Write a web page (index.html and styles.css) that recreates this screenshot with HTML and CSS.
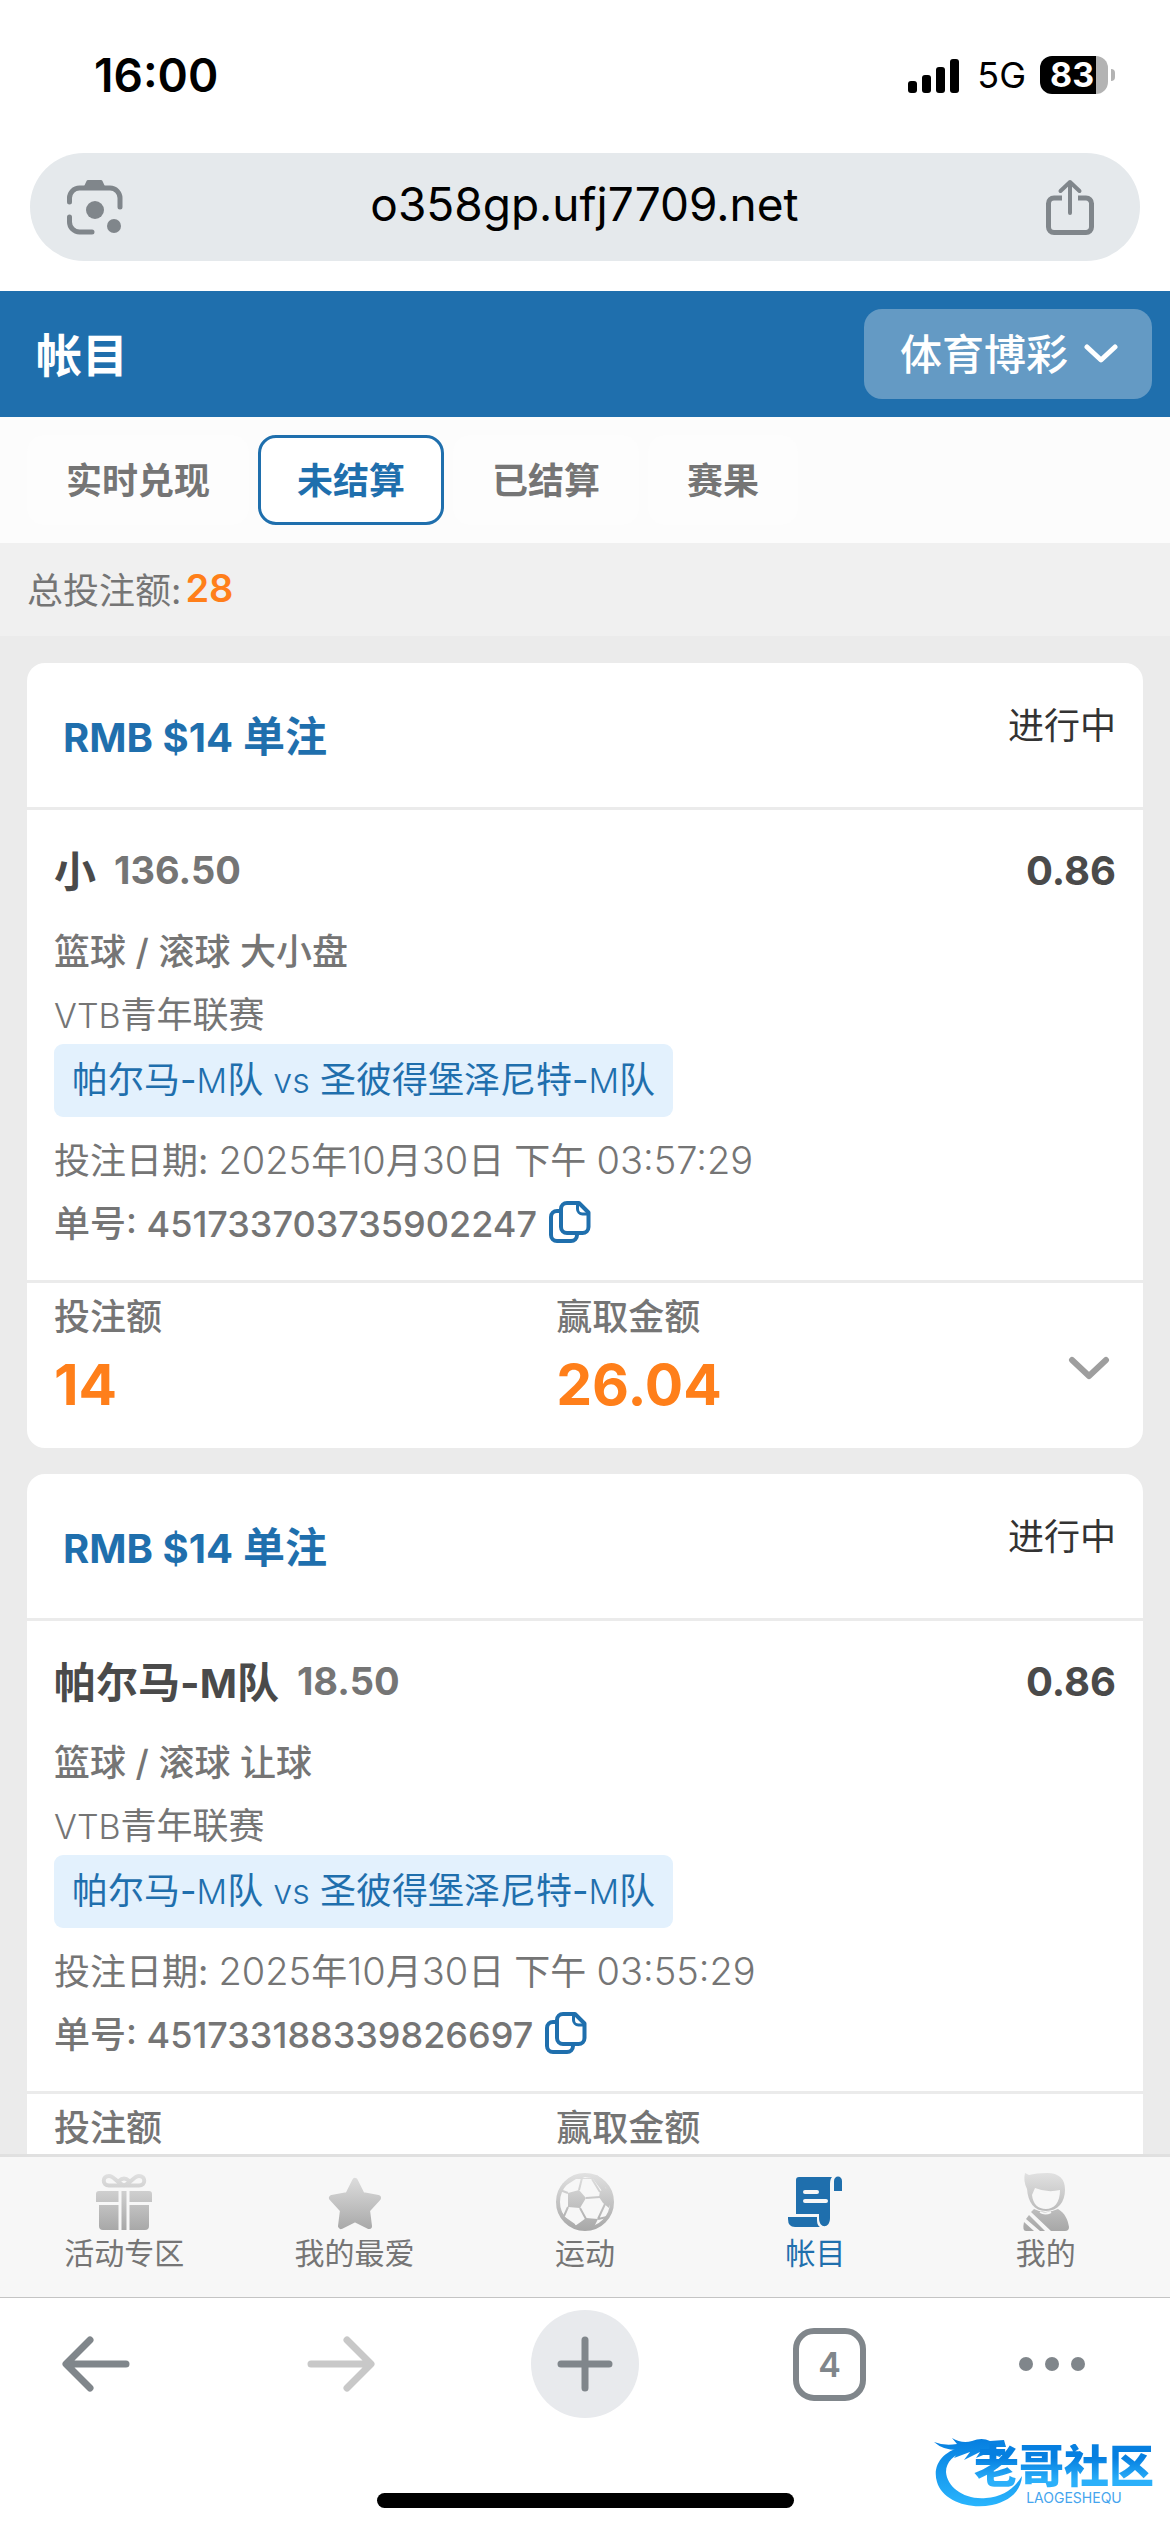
FILE: index.html
```html
<!DOCTYPE html>
<html lang="zh-CN">
<head>
<meta charset="utf-8">
<meta name="viewport" content="width=device-width, initial-scale=1">
<title>帐目</title>
<link rel="stylesheet" href="styles.css">
</head>
<body>
<div class="status-bar">
  <time class="clock">16:00</time>
  <div class="status-icons">
    <svg class="signal" width="52" height="35" viewBox="0 0 52 35" aria-hidden="true">
      <rect x="0" y="23" width="9" height="12" rx="3"/><rect x="14" y="17" width="9" height="18" rx="3"/><rect x="28" y="9" width="9" height="26" rx="3"/><rect x="42" y="1" width="9" height="34" rx="3"/>
    </svg>
    <span class="network">5G</span>
    <div class="battery">83</div>
    <span class="battery-cap"></span>
  </div>
</div>
<div class="address-bar">
  <button class="icon-button" aria-label="相机搜索">
    <svg width="56" height="56" viewBox="0 0 56 56" fill="none" stroke="#80868b" stroke-width="5" stroke-linecap="round" aria-hidden="true">
      <path d="M2.500 23V19a10 10 0 0 1 10-10H43a10 10 0 0 1 10 10V28M2.500 38V43a10 10 0 0 0 10 10H25"/>
      <path d="M18 9L21 2.500H34L37 9Z" fill="#80868b" stroke-width="3" stroke-linejoin="round"/>
      <circle cx="28" cy="31" r="9" fill="#80868b" stroke="none"/><circle cx="47" cy="47" r="7" fill="#80868b" stroke="none"/>
    </svg>
  </button>
  <input class="url" type="text" value="o358gp.ufj7709.net" aria-label="网址">
  <button class="icon-button" aria-label="分享">
    <svg width="48" height="57" viewBox="0 0 48 57" fill="none" stroke="#80868b" stroke-width="5" stroke-linejoin="round" aria-hidden="true">
      <path d="M16 19H8a5.500 5.500 0 0 0-5.500 5.500V48A5.500 5.500 0 0 0 8 53.500H40A5.500 5.500 0 0 0 45.500 48V24.500A5.500 5.500 0 0 0 40 19H32"/>
      <path d="M24 34V3M14.500 12L24 3L33.500 12" stroke-width="4" stroke-linecap="round"/>
    </svg>
  </button>
</div>
<header class="app-header">
  <h1 class="page-title">帐目</h1>
  <div class="product-picker">
    <select class="product-select" aria-label="产品"><option>体育博彩</option></select>
    <svg class="product-chevron" width="34" height="20" viewBox="0 0 34 20" fill="none" stroke="#fff" stroke-width="5" stroke-linecap="round" stroke-linejoin="round" aria-hidden="true"><path d="M3 3L17 16L31 3"/></svg>
  </div>
</header>
<nav class="tabs" aria-label="注单分类">
  <button class="tab">实时兑现</button>
  <button class="tab tab-active" aria-current="true">未结算</button>
  <button class="tab">已结算</button>
  <button class="tab">赛果</button>
</nav>
<div class="summary">总投注额:<strong class="summary-value">28</strong></div>
<main class="bet-list">
  <article class="card">
    <header class="card-head">
      <h2 class="bet-title"><span class="title-latin">RMB $14</span> 单注</h2>
      <span class="bet-state">进行中</span>
    </header>
    <div class="card-body">
      <div class="pick-row">
        <span class="pick">小</span><span class="handicap">136.50</span><span class="odds">0.86</span>
      </div>
      <p class="line market">篮球 / 滚球 大小盘</p>
      <p class="line league"><span class="latin">VTB</span>青年联赛</p>
      <p class="match">帕尔马-<span class="latin">M</span>队 <span class="latin">vs</span> 圣彼得堡泽尼特-<span class="latin">M</span>队</p>
      <p class="line">投注日期: <span class="digits">2025</span>年<span class="digits">10</span>月<span class="digits">30</span>日 下午 <span class="digits">03:57:29</span></p>
      <p class="line order">单号: 451733703735902247
        <button class="copy" aria-label="复制单号"><svg width="42" height="42" viewBox="0 0 42 42" fill="none" stroke="#1f6fad" stroke-width="4" stroke-linejoin="round" aria-hidden="true"><path d="M11 10H8a6 6 0 0 0-6 6V34a6 6 0 0 0 6 6H22a6 6 0 0 0 6-6V32"/><path d="M18 2H30L39.500 11.500V26a6 6 0 0 1-6 6H18a6 6 0 0 1-6-6V8a6 6 0 0 1 6-6Z"/><path d="M28.500 3V8a5 5 0 0 0 5 5H39" stroke-width="3"/></svg></button>
      </p>
    </div>
    <footer class="card-foot">
      <div class="amount"><span class="amount-label">投注额</span><strong class="amount-value">14</strong></div>
      <div class="amount"><span class="amount-label">赢取金额</span><strong class="amount-value">26.04</strong></div>
      <button class="expand" aria-label="展开"><svg width="42" height="26" viewBox="0 0 42 26" fill="none" stroke="#9e9e9e" stroke-width="6" stroke-linecap="round" stroke-linejoin="round" aria-hidden="true"><path d="M4 4L21 20L38 4"/></svg></button>
    </footer>
  </article>
  <article class="card">
    <header class="card-head">
      <h2 class="bet-title"><span class="title-latin">RMB $14</span> 单注</h2>
      <span class="bet-state">进行中</span>
    </header>
    <div class="card-body">
      <div class="pick-row">
        <span class="pick">帕尔马-<span class="title-latin">M</span>队</span><span class="handicap">18.50</span><span class="odds">0.86</span>
      </div>
      <p class="line market">篮球 / 滚球 让球</p>
      <p class="line league"><span class="latin">VTB</span>青年联赛</p>
      <p class="match">帕尔马-<span class="latin">M</span>队 <span class="latin">vs</span> 圣彼得堡泽尼特-<span class="latin">M</span>队</p>
      <p class="line">投注日期: <span class="digits">2025</span>年<span class="digits">10</span>月<span class="digits">30</span>日 下午 <span class="digits">03:55:29</span></p>
      <p class="line order">单号: 451733188339826697
        <button class="copy" aria-label="复制单号"><svg width="42" height="42" viewBox="0 0 42 42" fill="none" stroke="#1f6fad" stroke-width="4" stroke-linejoin="round" aria-hidden="true"><path d="M11 10H8a6 6 0 0 0-6 6V34a6 6 0 0 0 6 6H22a6 6 0 0 0 6-6V32"/><path d="M18 2H30L39.500 11.500V26a6 6 0 0 1-6 6H18a6 6 0 0 1-6-6V8a6 6 0 0 1 6-6Z"/><path d="M28.500 3V8a5 5 0 0 0 5 5H39" stroke-width="3"/></svg></button>
      </p>
    </div>
    <footer class="card-foot">
      <div class="amount"><span class="amount-label">投注额</span></div>
      <div class="amount"><span class="amount-label">赢取金额</span></div>
    </footer>
  </article>
</main>
<nav class="tab-bar" aria-label="主导航">
  <a class="tab-link" href="#promo">
    <svg width="60" height="60" viewBox="0 0 60 60" aria-hidden="true">
      <defs><linearGradient id="grey" gradientUnits="userSpaceOnUse" x1="0" y1="0" x2="0" y2="60"><stop offset="0" stop-color="#e2e2e2"/><stop offset="1" stop-color="#a6a6a6"/></linearGradient></defs>
      <g fill="url(#grey)"><path d="M5 19H24.500V30H2V22a3 3 0 0 1 3-3ZM27.500 19H32.500V58H27.500ZM35.500 19H55a3 3 0 0 1 3 3V30H35.500ZM5 33H24.500V58H9a4 4 0 0 1-4-4ZM35.500 33H55V54a4 4 0 0 1-4 4H35.500Z"/></g>
      <path d="M30 13.500H15C8 13.500 8 4 15 4C20 4 22 10 30 13.500C38 10 40 4 45 4C52 4 52 13.500 45 13.500ZM25 9Q30 4 35 9" fill="none" stroke="url(#grey)" stroke-width="4"/>
    </svg>活动专区</a>
  <a class="tab-link" href="#favourites">
    <svg width="60" height="60" viewBox="0 0 60 60" aria-hidden="true"><path d="M30 9L37 23L53 26L42 38L44 54L30 47L16 54L18 38L7 26L23 23Z" fill="url(#grey)" stroke="url(#grey)" stroke-width="6" stroke-linejoin="round"/></svg>我的最爱</a>
  <a class="tab-link" href="#sports">
    <svg width="60" height="60" viewBox="0 0 60 60" aria-hidden="true">
      <circle cx="30" cy="30" r="27" fill="none" stroke="url(#grey)" stroke-width="4"/>
      <path d="M13 21L24 18L31 26L25 36L13 35ZM45 19L53 16L57 26L54 36L48 31L44 25ZM27 49L31 46L43 47L39 55L30 58L20 54ZM22 3L30 6L38 5L42 3L48 8L51 17L47 19L38 7L26 7L21 7L10 14L7 12ZM3 34L10 45L20 52L21 56L10 50Z" fill="url(#grey)"/>
      <path d="M24 18L27 6M13 21L5 18M31 26L45 25M25 36L31 47M13 35L9 44M43 47L50 32M45 20L37 7M43 47L52 45" fill="none" stroke="url(#grey)" stroke-width="2"/>
    </svg>运动</a>
  <a class="tab-link tab-link-active" href="#bets" aria-current="page">
    <svg width="60" height="60" viewBox="0 0 60 60" fill="#1f6fad" aria-hidden="true">
      <path d="M14 5H47Q45 7 45 12V46C45 57 34 57 34 46V42H11V8a3 3 0 0 1 3-3Z"/><path d="M49 19V9C49 3 57 3 57 9V19ZM3 45H32C32 50 32 53 35 55H10Q3 55 3 47Z"/>
      <path d="M20 20H32M20 29H41" stroke="#f7f7f7" stroke-width="4" stroke-linecap="round"/>
    </svg>帐目</a>
  <a class="tab-link" href="#me">
    <svg width="60" height="60" viewBox="0 0 60 60" aria-hidden="true">
      <path fill-rule="evenodd" fill="url(#grey)" d="M9 1L13 3Q20 1 31 1Q49 1 49 18C49 30 42 39 30 39C18 39 12 30 11 17Q7 9 9 1ZM19 16L16 23C17 32 22 37 30 37C38 37 44 31 44 18Q31 21 19 16Z"/>
      <path d="M18 37Q29 43 42 37C49 41 52 48 53 55Q53 59 49 59H35L15 40ZM13 43L29 59H24L10 47ZM8 50L18 59H10Q6 59 8 50Z" fill="url(#grey)"/>
      <path d="M24 40Q29 43 35 40" fill="none" stroke="#f7f7f7" stroke-width="2"/>
    </svg>我的</a>
</nav>
<div class="browser-bar">
  <button class="browser-button browser-back" aria-label="后退"><svg width="68" height="56" viewBox="0 0 68 56" fill="none" stroke="#80868b" stroke-width="7" stroke-linecap="round" stroke-linejoin="round" aria-hidden="true"><path d="M64 28H5M28 4L4 28L28 52"/></svg></button>
  <button class="browser-button" aria-label="前进"><svg width="68" height="56" viewBox="0 0 68 56" fill="none" stroke="#c8c8c8" stroke-width="7" stroke-linecap="round" stroke-linejoin="round" aria-hidden="true"><path d="M4 28H63M40 4L64 28L40 52"/></svg></button>
  <button class="browser-button new-tab" aria-label="新标签页"><svg width="56" height="56" viewBox="0 0 56 56" fill="none" stroke="#80868b" stroke-width="7" stroke-linecap="round" aria-hidden="true"><path d="M28 4V52M4 28H52"/></svg></button>
  <button class="browser-button tab-count" aria-label="标签页 4">4</button>
  <button class="browser-button browser-more" aria-label="更多"><svg width="68" height="16" viewBox="0 0 68 16" fill="#80868b" aria-hidden="true"><circle cx="8" cy="8" r="7"/><circle cx="34" cy="8" r="7"/><circle cx="60" cy="8" r="7"/></svg></button>
</div>
<div class="home-area"><span class="home-indicator"></span></div>
<div class="watermark">
  <svg class="watermark-dragon" width="96" height="80" viewBox="0 0 96 80" aria-hidden="true">
    <defs><linearGradient id="sea" gradientUnits="userSpaceOnUse" x1="0" y1="10" x2="0" y2="80"><stop offset="0" stop-color="#067fe0"/><stop offset="1" stop-color="#2bb8ff"/></linearGradient></defs>
    <g fill="url(#sea)"><path d="M34 16C10 20 0 36 5 52C10 70 36 80 60 75C78 71 89 61 90 46C82 59 70 67 54 68C32 70 15 57 14 42C14 32 22 24 34 22Z"/>
    <path d="M2 12Q12 16 25 14L20 8Q30 14 40 11Q50 7 58 11L72 10L74 17L60 17Q66 22 73 20L68 27L56 23L44 28L48 22L32 30L38 22L22 28L28 20Q12 21 2 12Z"/></g>
  </svg>
  <div class="watermark-text"><span class="watermark-name">老哥社区</span><span class="watermark-latin">LAOGESHEQU</span></div>
</div>
</body>
</html>
```
FILE: styles.css
```css
* { box-sizing: border-box; }

body {
  margin: 0;
  height: 100vh;
  display: flex;
  flex-direction: column;
  position: relative;
  background: #fff;
  color: #757575;
  font-family: Inter, "Noto Sans CJK SC", sans-serif;
  font-size: 36px;
}

h1, h2, p { margin: 0; }

button, input, select {
  margin: 0;
  padding: 0;
  border: 0;
  background: none;
  color: inherit;
  font: inherit;
}

svg { display: block; flex: none; }

/* Phone status bar */
.status-bar {
  flex: none;
  height: 150px;
  padding: 0 55px 0 94px;
  display: flex;
  align-items: center;
  justify-content: space-between;
  color: #000;
}
.clock { font-size: 46px; font-weight: 600; }
.status-icons { display: flex; align-items: center; }
.network { margin: 0 14px 0 17px; font-size: 36px; }
.battery {
  width: 68px;
  height: 38px;
  padding-left: 10px;
  border-radius: 12px;
  background: linear-gradient(90deg, #000 56px, #b3b3b3 56px);
  color: #fff;
  font-size: 34px;
  font-weight: 700;
  line-height: 38px;
}
.battery-cap {
  width: 4px;
  height: 12px;
  margin-left: 3px;
  border-radius: 0 4px 4px 0;
  background: #b3b3b3;
}

/* Browser address bar */
.address-bar {
  flex: none;
  height: 108px;
  margin: 3px 30px 30px;
  padding: 0 46px 0 37px;
  display: flex;
  align-items: center;
  border-radius: 54px;
  background: #e5e9ec;
}
.url {
  flex: 1;
  min-width: 0;
  padding-bottom: 6px;
  color: #000;
  font-size: 46px;
  text-align: center;
}

/* App header */
.app-header {
  flex: none;
  height: 126px;
  padding: 0 18px 0 36px;
  display: flex;
  align-items: center;
  justify-content: space-between;
  background: #1f6fad;
  color: #fff;
}
.page-title { padding-bottom: 4px; font-size: 46px; font-weight: 700; }
.product-picker { position: relative; }
.product-select {
  appearance: none;
  width: 288px;
  height: 90px;
  padding-left: 36px;
  border-radius: 18px;
  background: #649ac4;
  font-size: 42px;
  font-weight: 500;
}
.product-chevron {
  position: absolute;
  top: 35px;
  right: 34px;
  pointer-events: none;
}

/* Bet category tabs */
.tabs {
  flex: none;
  padding: 18px 27px;
  display: flex;
  gap: 9px;
  background: #fcfcfc;
}
.tab {
  height: 90px;
  padding: 0 36px 4px;
  border: 3px solid transparent;
  border-radius: 18px;
  background: #fdfdfd;
  font-weight: 700;
}
.tab-active { border-color: #1f6fad; background: #fff; color: #1f6fad; }

.summary {
  flex: none;
  height: 93px;
  padding: 0 27px 4px;
  display: flex;
  align-items: center;
  background: #f0f0f0;
}
.summary-value { margin-left: 4px; color: #ff7f1a; font-size: 38px; font-weight: 600; }

/* Bet slips */
.bet-list {
  flex: 1;
  min-height: 0;
  padding: 27px;
  overflow-y: auto;
  scrollbar-width: none;
  background: #ebebeb;
}
.card { border-radius: 18px; background: #fff; }
.card + .card { margin-top: 26px; }
.card-head {
  height: 147px;
  padding: 36px 27px 36px 36px;
  display: flex;
  justify-content: space-between;
  border-bottom: 3px solid #ebebeb;
}
.bet-title {
  color: #1f6fad;
  font-size: 42px;
  font-weight: 700;
  line-height: 75px;
}
.title-latin { font-size: 40px; }
.bet-state { color: #333; line-height: 54px; }
.card-body { padding: 27px 27px 24px; }
.pick-row {
  height: 66px;
  margin-bottom: 18px;
  display: flex;
  align-items: center;
  color: #4a4a4a;
}
.pick { padding-bottom: 4px; font-size: 42px; font-weight: 700; }
.handicap { margin-left: 18px; color: #757575; font-size: 38px; font-weight: 700; }
.odds { margin-left: auto; font-size: 40px; font-weight: 700; }
.line { line-height: 63px; }
.league { margin-bottom: -3px; }
.league .latin { font-size: 34px; }
.market, .order { font-weight: 500; }
.latin, .digits { font-weight: 300; }
.match {
  width: fit-content;
  margin-bottom: 12px;
  padding: 0 18px;
  border-radius: 9px;
  background: #e3f1fd;
  color: #1f6fad;
  line-height: 72px;
}
.match .latin { font-size: 34px; }
.digits { font-size: 38px; }
.order { display: flex; align-items: center; }
.copy { margin: 0 0 6px 12px; }
.card-foot {
  min-height: 168px;
  display: grid;
  grid-template-columns: 45% 45% 10%;
  border-top: 3px solid #ebebeb;
}
.amount { padding: 7px 27px; display: flex; flex-direction: column; }
.amount-label { font-weight: 500; line-height: 54px; }
.amount-value { color: #ff7f1a; font-size: 57px; font-weight: 700; line-height: 82px; }
.expand { padding: 6px 0 0 4px; display: grid; place-items: center; }

/* App tab bar */
.tab-bar {
  flex: none;
  height: 144px;
  padding: 0 9px;
  display: grid;
  grid-template-columns: repeat(5, 1fr);
  border-top: 3px solid #e0e0e0;
  border-bottom: 1px solid #c4c4c4;
  background: #f7f7f7;
}
.tab-link {
  padding-top: 15px;
  display: flex;
  flex-direction: column;
  align-items: center;
  color: #757575;
  font-size: 30px;
  line-height: 42px;
  text-decoration: none;
}
.tab-link-active { color: #1f6fad; }

/* Browser toolbar */
.browser-bar {
  flex: none;
  height: 132px;
  display: grid;
  grid-template-columns: 218fr 245fr 244fr 245fr 218fr;
  align-items: center;
}
.browser-button { justify-self: center; }
.browser-back { margin-left: 62px; justify-self: start; }
.browser-more { margin-right: 84px; justify-self: end; }
.new-tab {
  width: 108px;
  height: 108px;
  display: grid;
  place-items: center;
  border-radius: 50%;
  background: #e8eaed;
}
.tab-count {
  width: 73px;
  height: 73px;
  border: 6px solid #80868b;
  border-radius: 21px;
  color: #80868b;
  font-size: 34px;
  font-weight: 600;
}
.home-area {
  flex: none;
  height: 102px;
  display: flex;
  justify-content: center;
  align-items: flex-end;
}
.home-indicator {
  width: 417px;
  height: 15px;
  margin-bottom: 24px;
  border-radius: 8px;
  background: #000;
}

/* Community watermark over the toolbar */
.watermark {
  position: absolute;
  right: 16px;
  bottom: 22px;
  display: flex;
}
.watermark-text {
  margin-left: -54px;
  padding-top: 14px;
  display: flex;
  flex-direction: column;
  align-items: center;
}
.watermark-name {
  background: linear-gradient(#067fe0 30%, #2bb0fa 80%);
  background-clip: text;
  color: transparent;
  font-size: 45px;
  font-weight: 900;
  line-height: 46px;
}
.watermark-latin { margin-left: 20px; color: #45a5ee; font-size: 14px; line-height: 16px; }
```
